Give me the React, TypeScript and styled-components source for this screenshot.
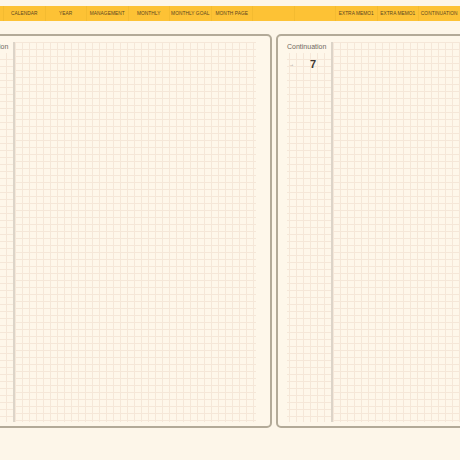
import styled, { createGlobalStyle } from "styled-components";

const GlobalStyle = createGlobalStyle`
  html, body {
    margin: 0;
    padding: 0;
    background: #fdf6e9;
    overflow: hidden;
  }
  body {
    width: 460px;
    height: 460px;
    font-family: "Liberation Sans", Arial, sans-serif;
  }
`;

const Screen = styled.div`
  width: 460px;
  height: 460px;
  overflow: hidden;
  padding-top: 6px;
  box-sizing: border-box;
`;

const TabBar = styled.nav`
  display: flex;
  height: 15px;
  background: #fdc235;
  padding-left: 3px;
`;

const Tab = styled.div`
  flex: 0 0 41.5px;
  display: flex;
  align-items: center;
  justify-content: center;
  border-left: 1px solid #f4bb30;
  box-sizing: border-box;
  font-size: 4.8px;
  color: #5b4722;
  white-space: nowrap;
  letter-spacing: 0.05px;
`;

const Spread = styled.div`
  display: flex;
  gap: 4px;
  margin-top: 13px;
  margin-left: -42px;
`;

const Page = styled.section`
  flex: 0 0 314px;
  height: 394px;
  box-sizing: border-box;
  border: 2px solid #b3aa98;
  border-radius: 5px;
  background: #fef7ea;
  padding: 6px 14px 4px 9px;
  display: grid;
  grid-template-columns: 44px 1fr;
`;

const gridLines = `
  background-image:
    linear-gradient(to right, #f5e7d8 1px, transparent 1px),
    linear-gradient(to bottom, #f5e7d8 1px, transparent 1px);
  background-size: 7px 7px;
`;

const SideColumn = styled.div`
  display: flex;
  flex-direction: column;
  ${gridLines}
  background-position: 2px 3px;
`;

const Label = styled.div`
  font-size: 7px;
  color: #6e6760;
  line-height: 9px;
  background: #fef7ea;
  padding-bottom: 2px;
`;

const DayRow = styled.div`
  display: flex;
  align-items: center;
  margin-top: 5px;
  height: 12px;
`;

const Arrow = styled.span`
  font-size: 5px;
  color: #8a8379;
  width: 21px;
  padding-left: 2px;
`;

const DayNumber = styled.span`
  font-size: 11px;
  font-weight: bold;
  color: #3d3833;
`;

const GridArea = styled.div`
  border-left: 2px solid #dcd4c8;
  ${gridLines}
  background-position: 0 0;
`;

const tabs = [
  "CALENDAR",
  "YEAR",
  "MANAGEMENT",
  "MONTHLY",
  "MONTHLY GOAL",
  "MONTH PAGE",
  "",
  "",
  "EXTRA MEMO1",
  "EXTRA MEMO1",
  "CONTINUATION",
];

const NotePage = ({ day }: { day?: number }) => (
  <Page>
    <SideColumn>
      <Label>Continuation</Label>
      {day !== undefined && (
        <DayRow>
          <Arrow>→</Arrow>
          <DayNumber>{day}</DayNumber>
        </DayRow>
      )}
    </SideColumn>
    <GridArea />
  </Page>
);

export default function App() {
  return (
    <Screen>
      <GlobalStyle />
      <TabBar>
        {tabs.map((t, i) => (
          <Tab key={i}>{t}</Tab>
        ))}
      </TabBar>
      <Spread>
        <NotePage />
        <NotePage day={7} />
      </Spread>
    </Screen>
  );
}
